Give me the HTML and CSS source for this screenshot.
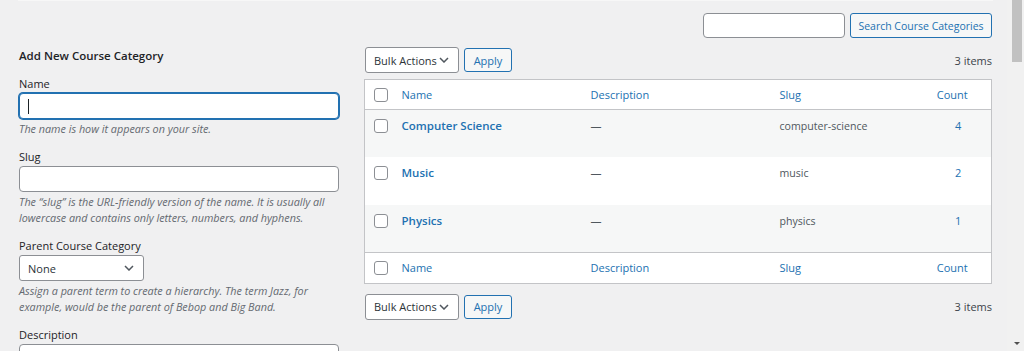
FILE: index.html
```html
<!DOCTYPE html>
<html lang="en">
<head>
<meta charset="utf-8">
<title>Course Categories</title>
<link rel="stylesheet" href="styles.css">
</head>
<body>
<div class="page">
  <div class="wrap">
    <div class="topline"></div>
    <div class="searchbar">
      <div class="input search-input"></div>
      <div class="button search-btn">Search Course Categories</div>
    </div>
    <div class="cols">
      <div class="left">
        <h2>Add New Course Category</h2>
        <div class="field">
          <label>Name</label>
          <div class="input text focus"><span class="caret"></span></div>
          <p class="desc">The name is how it appears on your site.</p>
        </div>
        <div class="field">
          <label>Slug</label>
          <div class="input text"></div>
          <p class="desc">The “slug” is the URL-friendly version of the name. It is usually all lowercase and contains only letters, numbers, and hyphens.</p>
        </div>
        <div class="field">
          <label>Parent Course Category</label>
          <div class="select parent"><span>None</span><svg width="10" height="6" viewBox="0 0 10 6"><path d="M1 1l4 4 4-4" fill="none" stroke="#50575e" stroke-width="1.5"/></svg></div>
          <p class="desc">Assign a parent term to create a hierarchy. The term Jazz, for example, would be the parent of Bebop and Big Band.</p>
        </div>
        <div class="field">
          <label>Description</label>
          <div class="input textarea"></div>
        </div>
      </div>
      <div class="right">
        <div class="tablenav">
          <div class="select bulk"><span>Bulk Actions</span><svg width="10" height="6" viewBox="0 0 10 6"><path d="M1 1l4 4 4-4" fill="none" stroke="#50575e" stroke-width="1.5"/></svg></div>
          <div class="button apply">Apply</div>
          <div class="count-items">3 items</div>
        </div>
        <table class="list">
          <thead>
            <tr>
              <th class="cb"><span class="checkbox"></span></th>
              <th class="c-name">Name</th>
              <th class="c-desc">Description</th>
              <th class="c-slug">Slug</th>
              <th class="c-count">Count</th>
            </tr>
          </thead>
          <tbody>
            <tr class="alt">
              <td class="cb"><span class="checkbox"></span></td>
              <td class="c-name"><a>Computer Science</a></td>
              <td class="c-desc">—</td>
              <td class="c-slug">computer-science</td>
              <td class="c-count"><a>4</a></td>
            </tr>
            <tr>
              <td class="cb"><span class="checkbox"></span></td>
              <td class="c-name"><a>Music</a></td>
              <td class="c-desc">—</td>
              <td class="c-slug">music</td>
              <td class="c-count"><a>2</a></td>
            </tr>
            <tr class="alt">
              <td class="cb"><span class="checkbox"></span></td>
              <td class="c-name"><a>Physics</a></td>
              <td class="c-desc">—</td>
              <td class="c-slug">physics</td>
              <td class="c-count"><a>1</a></td>
            </tr>
          </tbody>
          <tfoot>
            <tr>
              <th class="cb"><span class="checkbox"></span></th>
              <th class="c-name">Name</th>
              <th class="c-desc">Description</th>
              <th class="c-slug">Slug</th>
              <th class="c-count">Count</th>
            </tr>
          </tfoot>
        </table>
        <div class="tablenav bottom">
          <div class="select bulk"><span>Bulk Actions</span><svg width="10" height="6" viewBox="0 0 10 6"><path d="M1 1l4 4 4-4" fill="none" stroke="#50575e" stroke-width="1.5"/></svg></div>
          <div class="button apply">Apply</div>
          <div class="count-items">3 items</div>
        </div>
      </div>
    </div>
  </div>
  <div class="scrollbar">
    <div class="thumb"></div>
    <div class="spacer"></div>
    <div class="arrow"></div>
  </div>
</div>
</body>
</html>
```

FILE: styles.css
```css
* { box-sizing: border-box; }
html, body { margin: 0; padding: 0; }
body {
  background: #f0f0f1;
  font-family: "Open Sans", "Noto Sans", sans-serif;
  font-size: 11px;
  color: #3c434a;
  overflow: hidden;
}
.page {
  display: flex;
  height: 351px;
  overflow: hidden;
}
.wrap {
  flex: 1;
  padding: 0 15px 0 18px;
}
.topline {
  height: 1px;
  background: #f7f7f7;
  margin-right: -1px;
}
.searchbar {
  display: flex;
  justify-content: flex-end;
  gap: 5px;
  margin-top: 12px;
}
.input {
  background: #fff;
  border: 1px solid #8c8f94;
  border-radius: 4px;
}
.search-input { width: 142px; height: 25px; }
.button {
  display: flex;
  align-items: center;
  justify-content: center;
  height: 25px;
  padding: 0 4px;
  border: 1px solid #2271b1;
  border-radius: 3px;
  background: #f6f7f7;
  color: #2271b1;
  white-space: nowrap;
}
.search-btn { width: 142px; font-size: 10.5px; }
.cols {
  display: flex;
  gap: 25px;
}
.left {
  width: 321px;
  padding-left: 1px;
}
h2 {
  margin: 10px 0 0;
  font-size: 11.5px;
  font-weight: 600;
  line-height: 16px;
  color: #1d2327;
}
.field { margin-top: 12px; }
label {
  display: block;
  line-height: 16px;
  margin-bottom: 1px;
  color: #1d2327;
}
.text { height: 26px; position: relative; }
.focus {
  border-color: #2271b1;
  box-shadow: 0 0 0 1px #2271b1;
}
.caret {
  display: block;
  width: 1px;
  height: 15px;
  background: #1d2327;
  margin: 5px 0 0 8px;
}
.textarea { height: 40px; }
.desc {
  margin: 2px 0 0;
  line-height: 16px;
  font-style: italic;
  color: #646970;
  font-size: 10.8px;
}
.select {
  display: flex;
  align-items: center;
  justify-content: space-between;
  height: 26px;
  padding: 0 9px 0 8px;
  background: #fff;
  border: 1px solid #8c8f94;
  border-radius: 3px;
  color: #2c3338;
}
.parent { width: 125px; height: 26px; }
.right { flex: 1; }
.tablenav {
  display: flex;
  align-items: center;
  gap: 5px;
  margin: 9px 0 6px 1px;
}
.tablenav.bottom { margin-top: 10px; }
.bulk { width: 94px; }
.apply { width: 48px; height: 24px; }
.count-items {
  margin-left: auto;
  color: #3c434a;
}
.list {
  width: 100%;
  border: 1px solid #c3c4c7;
  border-collapse: collapse;
  background: #fff;
  table-layout: fixed;
}
.list th {
  height: 30px;
  font-weight: 400;
  color: #2271b1;
  text-align: left;
  padding: 0 10px;
  vertical-align: middle;
}
.list thead tr { border-bottom: 1px solid #c3c4c7; }
.list tfoot tr { border-top: 1px solid #c3c4c7; }
.list tfoot th { height: 31px; }
.list td {
  height: 47.5px;
  padding: 8px 10px 0;
  vertical-align: top;
  line-height: 16px;
  color: #50575e;
}
.list tr.alt td { background: #f6f7f7; }
.list .cb { width: 27px; padding: 0 0 0 9px; }
.list td.cb { padding-top: 9px; }
.list .c-name { width: 189px; }
.list .c-desc { width: 189px; }
.list .c-slug { width: 156px; }
.list td.c-slug { font-size: 10.6px; }
.list .c-count { text-align: center; }
.list th.c-count { padding-right: 22px; }
.list a { color: #2271b1; }
.list .c-name a { font-weight: 600; font-size: 11.5px; }
.checkbox {
  display: block;
  width: 14px;
  height: 14px;
  border: 1px solid #8c8f94;
  border-radius: 3px;
  background: #fff;
}
.scrollbar {
  width: 17px;
  display: flex;
  flex-direction: column;
  align-items: center;
  background: #f1f1f1;
}
.thumb {
  width: 10px;
  height: 62px;
  margin-left: 3px;
  background: #c1c1c1;
}
.spacer { flex: 1; }
.arrow {
  width: 0;
  height: 0;
  border-left: 3px solid transparent;
  border-right: 3px solid transparent;
  border-top: 3px solid #505050;
  margin: 0 0 6px 2px;
}
```
